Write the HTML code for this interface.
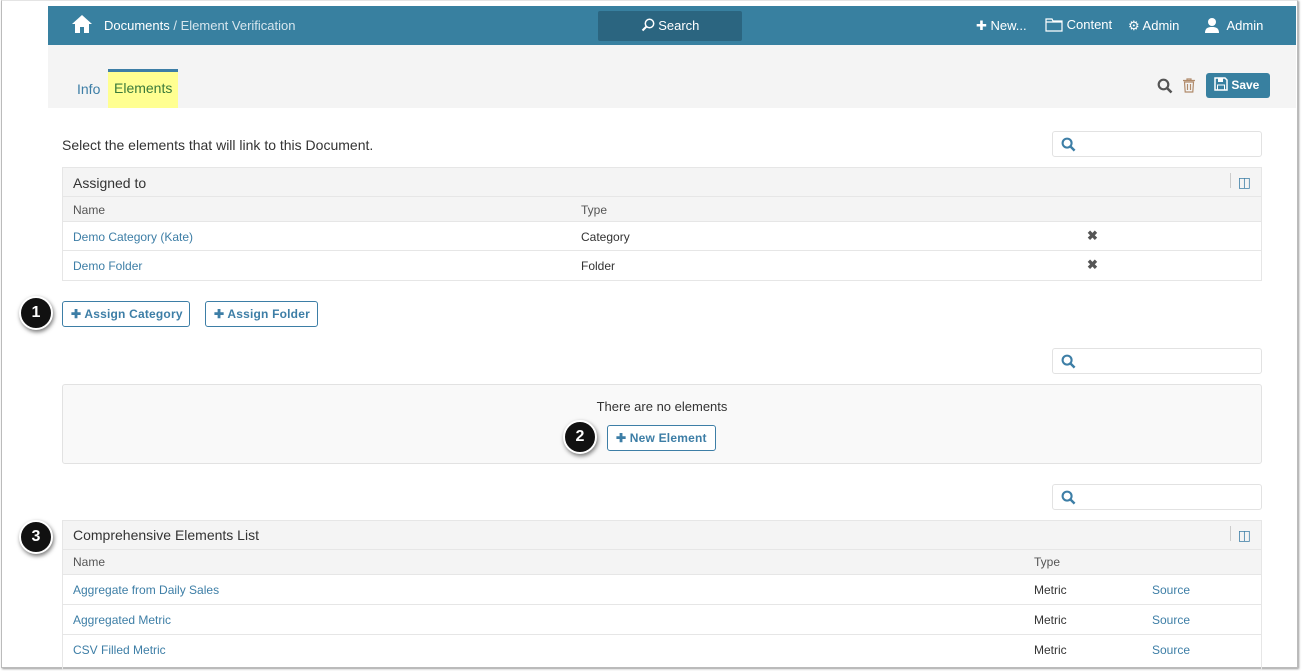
<!DOCTYPE html><html><head><style>
*{box-sizing:border-box;margin:0;padding:0}
body{width:1303px;height:671px;background:#fff;font-family:"Liberation Sans",sans-serif;position:relative;overflow:hidden;color:#333}
.a{position:absolute}
.frame{left:1px;top:0;width:1297px;height:668px;border:1px solid #bbb;border-top:1px solid #e4e4e4;box-shadow:1px 1px 2px #999}
.hdr{left:48px;top:6px;width:1248px;height:39px;background:#3880a0;color:#fff;font-size:13px}
.tabs{left:48px;top:45px;width:1248px;height:63px;background:#f4f4f4}
.lnk{color:#3d7ea6;font-size:12px}
.btn{border:1px solid #3d7ea6;border-radius:3px;color:#3d7ea6;font-size:12px;font-weight:bold;height:26px;line-height:24px;padding:0 0 0 8px;white-space:nowrap;letter-spacing:0.2px}
.srch{width:210px;height:26px;border:1px solid #e2e2e2;border-radius:3px;background:#fff}
.badge{width:34px;height:34px;border-radius:50%;background:#111;border:2px solid #fff;color:#fff;font-weight:bold;font-size:16px;text-align:center;line-height:30px;box-shadow:1px 2px 4px #777}
.tbl{left:62px;width:1200px;border:1px solid #e6e6e6}
.th{background:#f4f4f4;color:#333;font-size:14px}
.row{border-top:1px solid #e6e6e6;height:30px;font-size:12px;position:relative}
.row span{position:absolute;top:8px}
</style></head><body>
<div class="a frame"></div>
<div class="a hdr">
<svg class="a" style="left:23px;top:8px" width="22" height="20" viewBox="0 0 22 20"><path d="M11 1 L1 10 L4 10 L4 19 L9 19 L9 13 L13 13 L13 19 L18 19 L18 10 L21 10 Z" fill="#fff"/></svg>
<div class="a" style="left:56px;top:12px">Documents <span style="color:#d6e6ee">/ Element Verification</span></div>
<div class="a" style="left:550px;top:5px;width:144px;height:30px;background:#2b6580;border-radius:2px;text-align:center;line-height:30px"><svg width="14" height="14" viewBox="0 0 14 14" style="vertical-align:-2px"><circle cx="8.5" cy="5.5" r="4.2" fill="none" stroke="#fff" stroke-width="1.5"/><path d="M5.5 8.5 L1.5 12.5" stroke="#fff" stroke-width="2"/></svg> Search</div>
<div class="a" style="left:928px;top:12px">✚ New...</div>
<div class="a" style="left:997px;top:11px"><svg width="18" height="15" viewBox="0 0 18 15" style="vertical-align:-3px"><path d="M1 2h6l1 2h9v10H1z M1 5h16" fill="none" stroke="#fff" stroke-width="1.2"/></svg> Content</div>
<div class="a" style="left:1080px;top:12px">⚙ Admin</div>
<div class="a" style="left:1156px;top:11px"><svg width="16" height="16" viewBox="0 0 16 16" style="vertical-align:-3px"><circle cx="8" cy="5" r="4" fill="#fff"/><path d="M1 16c0-5 3-6 7-6s7 1 7 6z" fill="#fff"/></svg>&nbsp; Admin</div>
</div>
<div class="a tabs">
<div class="a" style="left:29px;top:36px;color:#3d7ea6;font-size:14px">Info</div>
<div class="a" style="left:60px;top:24px;width:70px;height:39px;background:#ffff91;border-top:3px solid #3d7ea6"></div>
<div class="a" style="left:66px;top:35px;color:#3a7a3a;font-size:14px">Elements</div>
<svg class="a" style="left:1109px;top:33px" width="16" height="16" viewBox="0 0 16 16"><circle cx="6.5" cy="6.5" r="4.8" fill="none" stroke="#555" stroke-width="2.2"/><path d="M10 10 L14.5 14.5" stroke="#555" stroke-width="2.6"/></svg>
<svg class="a" style="left:1135px;top:33px" width="12" height="15" viewBox="0 0 12 15"><path d="M0 2.5h12M4 2.5V1h4v1.5M1.5 4h9l-.7 10H2.2z M4.5 6v6M7.5 6v6" fill="none" stroke="#b08a6a" stroke-width="1.2"/></svg>
<div class="a" style="left:1158px;top:28px;width:64px;height:25px;background:#3880a0;border-radius:3px;color:#fff;font-size:12px;font-weight:bold;line-height:25px;padding-left:8px"><svg width="14" height="14" viewBox="0 0 14 14" style="vertical-align:-2px"><path d="M1 1h10l2 2v10H1z" fill="none" stroke="#fff" stroke-width="1.5"/><rect x="4" y="1" width="5" height="4" fill="#fff"/><rect x="3.5" y="8" width="7" height="5" fill="none" stroke="#fff"/></svg> Save</div>
</div>
<div class="a" style="left:62px;top:137px;font-size:14px">Select the elements that will link to this Document.</div>
<div class="a srch" style="left:1052px;top:131px"><svg class="a" style="left:8px;top:5px" width="15" height="15" viewBox="0 0 16 16"><circle cx="6.5" cy="6.5" r="4.8" fill="none" stroke="#3d7ea6" stroke-width="2.2"/><path d="M10 10 L14.5 14.5" stroke="#3d7ea6" stroke-width="2.6"/></svg></div>
<div class="a tbl" style="top:167px;height:114px">
<div class="th" style="height:28px;padding:7px 10px">Assigned to<span class="a" style="right:30px;top:5px;width:1px;height:15px;background:#ccc"></span><span class="a" style="right:10px;top:6px;color:#3d7ea6">◫</span></div>
<div class="row th" style="height:25px;font-size:12px;color:#555"><span style="left:10px;top:6px">Name</span><span style="left:518px;top:6px">Type</span></div>
<div class="row" style="height:29px"><span class="lnk" style="left:10px">Demo Category (Kate)</span><span style="left:518px">Category</span><span style="left:1024px;font-weight:bold;color:#555;font-size:13px;top:6px">✖</span></div>
<div class="row" style="height:29px"><span class="lnk" style="left:10px">Demo Folder</span><span style="left:518px">Folder</span><span style="left:1024px;font-weight:bold;color:#555;font-size:13px;top:6px">✖</span></div>
</div>
<div class="a badge" style="left:19px;top:296px">1</div>
<div class="a btn" style="left:62px;top:301px;width:128px">✚ Assign Category</div>
<div class="a btn" style="left:205px;top:301px;width:113px">✚ Assign Folder</div>
<div class="a srch" style="left:1052px;top:348px"><svg class="a" style="left:8px;top:5px" width="15" height="15" viewBox="0 0 16 16"><circle cx="6.5" cy="6.5" r="4.8" fill="none" stroke="#3d7ea6" stroke-width="2.2"/><path d="M10 10 L14.5 14.5" stroke="#3d7ea6" stroke-width="2.6"/></svg></div>
<div class="a" style="left:62px;top:384px;width:1200px;height:80px;background:#f9f9f9;border:1px solid #e2e2e2;border-radius:3px">
<div style="text-align:center;margin-top:14px;font-size:13px">There are no elements</div></div>
<div class="a badge" style="left:563px;top:420px">2</div>
<div class="a btn" style="left:607px;top:425px;background:#fff;width:109px">✚ New Element</div>
<div class="a srch" style="left:1052px;top:484px"><svg class="a" style="left:8px;top:5px" width="15" height="15" viewBox="0 0 16 16"><circle cx="6.5" cy="6.5" r="4.8" fill="none" stroke="#3d7ea6" stroke-width="2.2"/><path d="M10 10 L14.5 14.5" stroke="#3d7ea6" stroke-width="2.6"/></svg></div>
<div class="a tbl" style="top:520px;height:150px">
<div class="th" style="height:28px;padding:6px 10px">Comprehensive Elements List<span class="a" style="right:30px;top:5px;width:1px;height:15px;background:#ccc"></span><span class="a" style="right:10px;top:6px;color:#3d7ea6">◫</span></div>
<div class="row th" style="height:25px;font-size:12px;color:#555"><span style="left:10px;top:5px">Name</span><span style="left:971px;top:5px">Type</span></div>
<div class="row" style="height:30px"><span class="lnk" style="left:10px">Aggregate from Daily Sales</span><span style="left:971px">Metric</span><span class="lnk" style="left:1089px">Source</span></div>
<div class="row" style="height:30px"><span class="lnk" style="left:10px">Aggregated Metric</span><span style="left:971px">Metric</span><span class="lnk" style="left:1089px">Source</span></div>
<div class="row" style="height:30px"><span class="lnk" style="left:10px">CSV Filled Metric</span><span style="left:971px">Metric</span><span class="lnk" style="left:1089px">Source</span></div>
</div>
<div class="a badge" style="left:19px;top:520px">3</div>
</body></html>
